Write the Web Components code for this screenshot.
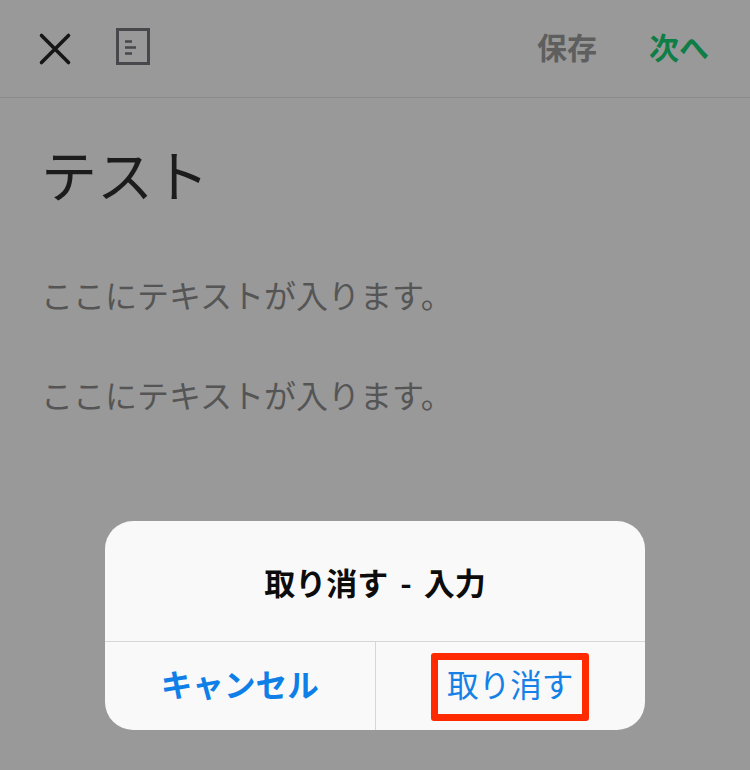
<!DOCTYPE html>
<html lang="ja">
<head>
<meta charset="utf-8">
<title>テスト</title>
<style>
html, body { margin: 0; padding: 0; background: #999; }
body { font-family: "Noto Sans CJK JP", "Noto Sans", sans-serif; }
</style>
</head>
<body>
<note-screen>
  <note-header></note-header>
  <note-body heading="テスト">
    <p>ここにテキストが入ります。</p>
    <p>ここにテキストが入ります。</p>
  </note-body>
  <confirm-dialog heading="取り消す - 入力" cancel="キャンセル" confirm="取り消す"></confirm-dialog>
</note-screen>

<script>
class NoteScreen extends HTMLElement {
    connectedCallback() {
        const shadow = this.attachShadow({ mode: 'open' });
        shadow.innerHTML = `
        <style>
        :host {
            display: flex;
            flex-direction: column;
            position: relative;
            width: 750px;
            height: 770px;
            overflow: hidden;
            background: #999;
        }
        </style>
        <slot></slot>`;
    }
}

class NoteHeader extends HTMLElement {
    connectedCallback() {
        const shadow = this.attachShadow({ mode: 'open' });
        shadow.innerHTML = `
        <style>
        :host {
            display: flex;
            align-items: center;
            height: 97px;
            border-bottom: 1px solid #8a8a8a;
            padding: 0 41px 0 38px;
            font-size: 30px;
            font-weight: 700;
            line-height: 1;
        }
        svg { display: block; flex: none; }
        .close { margin-right: 44px; }
        .doc { margin-top: -4px; }
        .save { margin: -6px 52px 0 auto; color: #5e5e5e; }
        .next { margin-top: -6px; color: #0e7d46; }
        </style>
        <svg class="close" width="34" height="34" viewBox="0 0 34 34" fill="none" stroke="#161616" stroke-width="3.6" stroke-linecap="round">
            <path d="M3.5 3.5 L30.5 30.5 M30.5 3.5 L3.5 30.5"/>
        </svg>
        <svg class="doc" width="34" height="37" viewBox="0 0 34 37" fill="none" stroke="#47474c">
            <rect x="1.5" y="1.5" width="31" height="34" stroke-width="3"/>
            <path d="M9 13.5 H16 M9 19.5 H20 M9 25.5 H16" stroke-width="2.6"/>
        </svg>
        <span class="save">保存</span>
        <span class="next">次へ</span>`;
    }
}

class NoteBody extends HTMLElement {
    connectedCallback() {
        const shadow = this.attachShadow({ mode: 'open' });
        shadow.innerHTML = `
        <style>
        :host {
            display: block;
            padding: 36px 41px 0;
        }
        h1 {
            margin: 0 0 60px;
            font-size: 56px;
            line-height: 78px;
            font-weight: 400;
            color: #1c1c1c;
        }
        ::slotted(p) {
            margin: 0 0 56px;
            font-size: 32px;
            line-height: 44px;
            color: #555;
        }
        </style>
        <h1></h1>
        <slot></slot>`;
        shadow.querySelector('h1').textContent = this.getAttribute('heading');
    }
}

class ConfirmDialog extends HTMLElement {
    connectedCallback() {
        const shadow = this.attachShadow({ mode: 'open' });
        shadow.innerHTML = `
        <style>
        :host {
            position: absolute;
            left: 105px;
            top: 521px;
            width: 540px;
            height: 209px;
            display: flex;
            flex-direction: column;
            background: #f9f9fa;
            border-radius: 28px;
            overflow: hidden;
        }
        .title {
            height: 120px;
            display: flex;
            align-items: center;
            justify-content: center;
            font-size: 31px;
            font-weight: 700;
            word-spacing: 5px;
            color: #0c0c0c;
            border-bottom: 1px solid #d6d6d8;
        }
        .actions { flex: 1; display: flex; }
        .btn {
            flex: 1;
            display: flex;
            align-items: center;
            justify-content: center;
            position: relative;
            padding-bottom: 7px;
            font-size: 31.6px;
            color: #1581e6;
        }
        .btn.cancel { font-weight: 700; color: #0f7fe8; border-right: 1px solid #d6d6d8; }
        .mark {
            position: absolute;
            left: 55px;
            top: 11px;
            width: 158px;
            height: 68px;
            box-sizing: border-box;
            border: 7px solid #ff2a00;
            border-radius: 3px;
        }
        </style>
        <div class="title"></div>
        <div class="actions">
            <div class="btn cancel"></div>
            <div class="btn confirm"><span class="label"></span><div class="mark"></div></div>
        </div>`;
        shadow.querySelector('.title').textContent = this.getAttribute('heading');
        shadow.querySelector('.cancel').textContent = this.getAttribute('cancel');
        shadow.querySelector('.label').textContent = this.getAttribute('confirm');
    }
}

customElements.define('note-screen', NoteScreen);
customElements.define('note-header', NoteHeader);
customElements.define('note-body', NoteBody);
customElements.define('confirm-dialog', ConfirmDialog);
</script>
</body>
</html>
